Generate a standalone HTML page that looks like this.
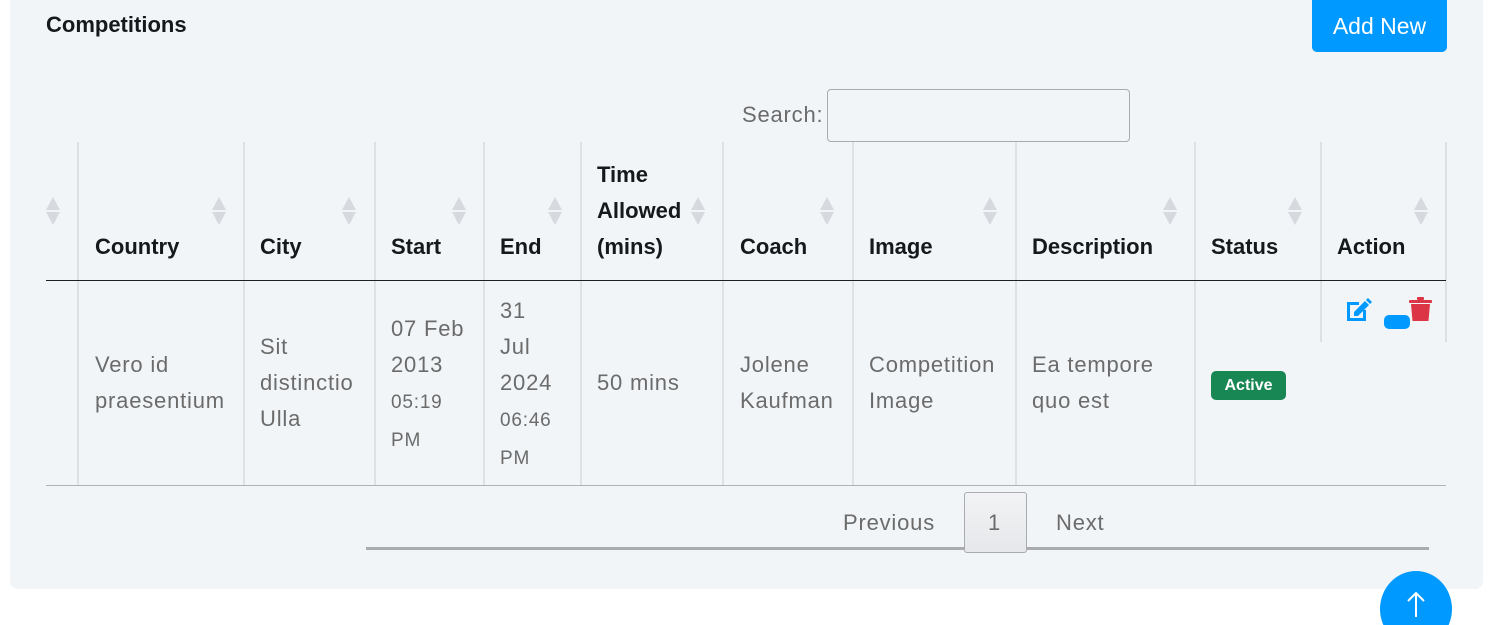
<!DOCTYPE html>
<html style="width:1506px;height:625px;overflow:hidden"><head><meta charset="utf-8"><style>
*{margin:0;padding:0;box-sizing:border-box}
body{width:1506px;height:625px;background:#fff;font-family:"Liberation Sans",sans-serif;position:relative;overflow:hidden}
.card{position:absolute;left:10px;top:-10px;width:1473px;height:599px;background:#f1f5f8;border-radius:8px}
.a{position:absolute;white-space:nowrap}
.h{font-weight:bold;font-size:22px;color:#16191c;line-height:36px}
.t{font-size:22px;color:#6b6b6b;line-height:36px;letter-spacing:0.8px}
.s{font-size:19px}
.v{position:absolute;top:142px;width:2px;height:343px;background:#dde0e4}
.sort{position:absolute;top:197px;width:14px;height:28px}
</style></head><body>
<div class="card"></div>
<div class="a" style="left:46px;top:10px;font-size:22px;font-weight:bold;color:#16191c;line-height:30px">Competitions</div>
<div class="a" style="left:1312px;top:-4px;width:135px;height:56px;background:#0099ff;border-radius:5px;color:#fff;font-size:23px;text-align:center;line-height:60px">Add New</div>
<div class="a t" style="left:742px;top:97px">Search:</div>
<div class="a" style="left:827px;top:89px;width:303px;height:53px;border:1px solid #a9abad;border-radius:4px;background:#f2f5f8"></div>

<div class="v" style="left:77px"></div><div class="v" style="left:243px"></div><div class="v" style="left:374px"></div><div class="v" style="left:483px"></div><div class="v" style="left:580px"></div><div class="v" style="left:722px"></div><div class="v" style="left:852px"></div><div class="v" style="left:1015px"></div><div class="v" style="left:1194px"></div><div class="v" style="left:1320px;height:200px"></div><div class="v" style="left:1445px;height:200px"></div>
<div class="a" style="left:46px;top:280px;width:1400px;height:1px;background:#1c1f23"></div>
<div class="a" style="left:46px;top:485px;width:1400px;height:1px;background:#b0b3b6"></div>

<svg width="0" height="0" style="position:absolute"><defs><g id="sr"><path d="M7 0L14 13H0Z" fill="#d6d9de"/><path d="M0 15H14L7 28Z" fill="#d6d9de"/></g></defs></svg>
<svg class="sort" style="left:46px"><use href="#sr"/></svg>
<svg class="sort" style="left:212px"><use href="#sr"/></svg>
<svg class="sort" style="left:342px"><use href="#sr"/></svg>
<svg class="sort" style="left:452px"><use href="#sr"/></svg>
<svg class="sort" style="left:548px"><use href="#sr"/></svg>
<svg class="sort" style="left:691px"><use href="#sr"/></svg>
<svg class="sort" style="left:820px"><use href="#sr"/></svg>
<svg class="sort" style="left:983px"><use href="#sr"/></svg>
<svg class="sort" style="left:1163px"><use href="#sr"/></svg>
<svg class="sort" style="left:1288px"><use href="#sr"/></svg>
<svg class="sort" style="left:1414px"><use href="#sr"/></svg>

<div class="a h" style="left:95px;top:229px">Country</div>
<div class="a h" style="left:260px;top:229px">City</div>
<div class="a h" style="left:391px;top:229px">Start</div>
<div class="a h" style="left:500px;top:229px">End</div>
<div class="a h" style="left:597px;top:157px">Time<br>Allowed<br>(mins)</div>
<div class="a h" style="left:740px;top:229px">Coach</div>
<div class="a h" style="left:869px;top:229px">Image</div>
<div class="a h" style="left:1032px;top:229px">Description</div>
<div class="a h" style="left:1211px;top:229px">Status</div>
<div class="a h" style="left:1337px;top:229px">Action</div>

<div class="a t" style="left:95px;top:347px">Vero id<br>praesentium</div>
<div class="a t" style="left:260px;top:329px">Sit<br>distinctio<br>Ulla</div>
<div class="a t" style="left:391px;top:311px">07 Feb<br>2013<br><span class="s">05:19<br>PM</span></div>
<div class="a t" style="left:500px;top:293px">31<br>Jul<br>2024<br><span class="s">06:46<br>PM</span></div>
<div class="a t" style="left:597px;top:365px">50 mins</div>
<div class="a t" style="left:740px;top:347px">Jolene<br>Kaufman</div>
<div class="a t" style="left:869px;top:347px">Competition<br>Image</div>
<div class="a t" style="left:1032px;top:347px">Ea tempore<br>quo est</div>
<div class="a" style="left:1211px;top:371px;width:75px;height:29px;background:#198754;border-radius:5px;color:#fff;font-weight:bold;font-size:16px;text-align:center;line-height:29px">Active</div>

<svg class="a" style="left:1345px;top:297px" width="30" height="26" viewBox="0 0 30 26">
<path d="M2 5h12v3H5v13h13v-8h3v11H2z" fill="#0099ff"/>
<path d="M9 15l11-11 4 4-11 11H9z" fill="#0099ff"/>
<path d="M21 3l2-2 4 4-2 2z" fill="#0099ff"/>
</svg>
<div class="a" style="left:1384px;top:315px;width:26px;height:14px;background:#0099ff;border-radius:5px"></div>
<svg class="a" style="left:1409px;top:297px" width="24" height="26" viewBox="0 0 24 26">
<rect x="8" y="0" width="7" height="3" rx="1" fill="#dc3545"/>
<rect x="0" y="3" width="23" height="3" rx="1" fill="#dc3545"/>
<path d="M2 7h19l-1.5 17H3.5z" fill="#dc3545"/>
</svg>

<div class="a" style="left:366px;top:547px;width:1063px;height:3px;background:#a9abad"></div>
<div class="a t" style="left:843px;top:505px">Previous</div>
<div class="a" style="left:964px;top:492px;width:63px;height:61px;border:1px solid #a9abad;border-radius:3px;background:linear-gradient(#f2f3f5,#e6e7ea)"></div>
<div class="a t" style="left:988px;top:505px">1</div>
<div class="a t" style="left:1056px;top:505px">Next</div>

<div class="a" style="left:1380px;top:571px;width:72px;height:76px;border-radius:50%;background:#0099ff"></div>
<svg class="a" style="left:1400px;top:589px" width="32" height="32" viewBox="0 0 32 32"><path d="M16 28V4M8 12l8-8 8 8" stroke="#fff" stroke-width="2" fill="none"/></svg>
</body></html>
